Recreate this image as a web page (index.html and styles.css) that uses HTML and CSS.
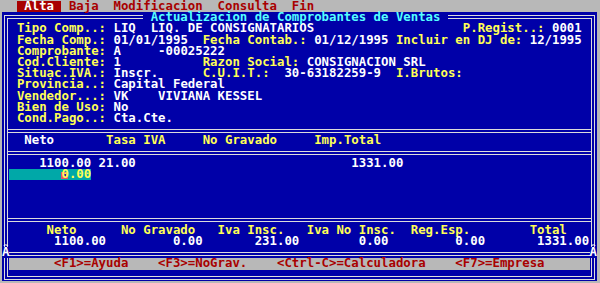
FILE: index.html
```html
<!DOCTYPE html>
<html>
<head>
  <title>Actualizacion de Comprobantes de Ventas</title>
  <link rel="stylesheet" href="styles.css">
</head>
<body>
  <div class="screen">
    <div class="menubar">  <span class="menu-active"> Alta </span> Baja  Modificacion  Consulta  Fin</div>
    <div class="desk">
      <div class="window">
        <div class="title"> Actualizacion de Comprobantes de Ventas </div>

        <!-- cabecera del comprobante -->
        <div class="row"> <span class="lbl">Tipo Comp..:</span> LIQ  LIQ. DE CONSIGNATARIOS                    <span class="lbl">P.Regist..:</span> 0001</div>
        <div class="row"> <span class="lbl">Fecha Comp.:</span> 01/01/1995  <span class="lbl">Fecha Contab.:</span> 01/12/1995 <span class="lbl">Incluir en DJ de:</span> 12/1995</div>
        <div class="row"> <span class="lbl">Comprobante:</span> A     -00025222</div>
        <div class="row"> <span class="lbl">Cod.Cliente:</span> 1           <span class="lbl">Razon Social:</span> CONSIGNACION SRL</div>
        <div class="row"> <span class="lbl">Situac.IVA.:</span> Inscr.      <span class="lbl">C.U.I.T.:</span>  30-63182259-9  <span class="lbl">I.Brutos:</span></div>
        <div class="row"> <span class="lbl">Provincia..:</span> Capital Federal</div>
        <div class="row"> <span class="lbl">Vendedor...:</span> VK    VIVIANA KESSEL</div>
        <div class="row"> <span class="lbl">Bien de Uso:</span> No</div>
        <div class="row"> <span class="lbl">Cond.Pago..:</span> Cta.Cte.</div>
        <div class="sep"></div>

        <!-- items -->
        <div class="row">  Neto       <span class="lbl">Tasa IVA</span>     <span class="lbl">No Gravado</span>     <span class="lbl">Imp.Total</span></div>
        <div class="sep"></div>
        <div class="row">    1100.00 21.00                             1331.00</div>
        <div class="row"><span class="hl">       <span class="cursor">0</span>.00</span></div>
        <div class="row"></div>
        <div class="row"></div>
        <div class="row"></div>
        <div class="sep"></div>

        <!-- totales -->
        <div class="row lbl">     Neto      No Gravado   Iva Insc.   Iva No Insc.  Reg.Esp.        Total</div>
        <div class="row">      1100.00         0.00       231.00        0.00         0.00       1331.00</div>
        <div class="sep"><span class="corner corner-l">Â</span><span class="corner corner-r">Â</span></div>

        <div class="row keys">      &lt;F1&gt;=Ayuda    &lt;F3&gt;=NoGrav.    &lt;Ctrl-C&gt;=Calculadora    &lt;F7&gt;=Empresa</div>
      </div>
    </div>
  </div>
</body>
</html>
```

FILE: styles.css
```css
/* pantalla de texto 80x25 */
body {
  margin: 0;
  width: 600px;
  height: 283px;
  overflow: hidden;
  background: #b8b8b8;
}
.screen {
  margin: 1px 0 0 2px;
  width: 595px;
  font-family: "DejaVu Sans Mono", monospace;
  font-weight: bold;
  font-size: 12.353px;
  line-height: 11.2px;
}
.menubar {
  height: 11.2px;
  white-space: pre;
  color: #a80000;
  background: #b8b8b8;
}
.menu-active {
  display: inline-block;
  vertical-align: top;
  height: 11.2px;
  background: #a80000;
  color: #fff;
}
.desk {
  height: 268.8px;
  box-sizing: border-box;
  padding: 2.8px 2px 1px 1.5px;
  background: #0000a8;
}
.window {
  position: relative;
  height: 100%;
  box-sizing: border-box;
  border: 4px double #dcdcdc;
  padding-top: 4.4px;
  color: #fff;
}
.title {
  position: absolute;
  top: -6.8px;
  left: calc(18ch + 1.94px);
  height: 11.2px;
  white-space: pre;
  background: #0000a8;
  color: #55ffff;
}
.row {
  height: 11.2px;
  padding-left: 1.94px;
  white-space: pre;
}
.lbl {
  color: #ffff55;
}
.sep {
  position: relative;
  height: 11.2px;
  box-sizing: border-box;
  padding-top: 4.6px;
}
.sep::before {
  content: "";
  display: block;
  border-top: 4px double #dcdcdc;
}
.corner {
  position: absolute;
  top: 0;
  width: 1ch;
  height: 11.2px;
  background: #0000a8;
  color: #fff;
}
.corner-l {
  left: -5.5px;
}
.corner-r {
  right: -6px;
}
.hl {
  display: inline-block;
  vertical-align: top;
  width: 11ch;
  height: 11.2px;
  background: #00a8a8;
  color: #ffff55;
}
.cursor {
  position: relative;
  z-index: 0;
}
.cursor::before {
  content: "";
  position: absolute;
  z-index: -1;
  left: 0;
  top: 4.7px;
  width: 7px;
  height: 7px;
  box-sizing: border-box;
  background: #2020a8;
  border: 2px solid #e8506a;
}
.keys {
  margin: 0 1.44px 0 1.94px;
  padding-left: 0;
  background: #b8b8b8;
  color: #a80000;
}
```
